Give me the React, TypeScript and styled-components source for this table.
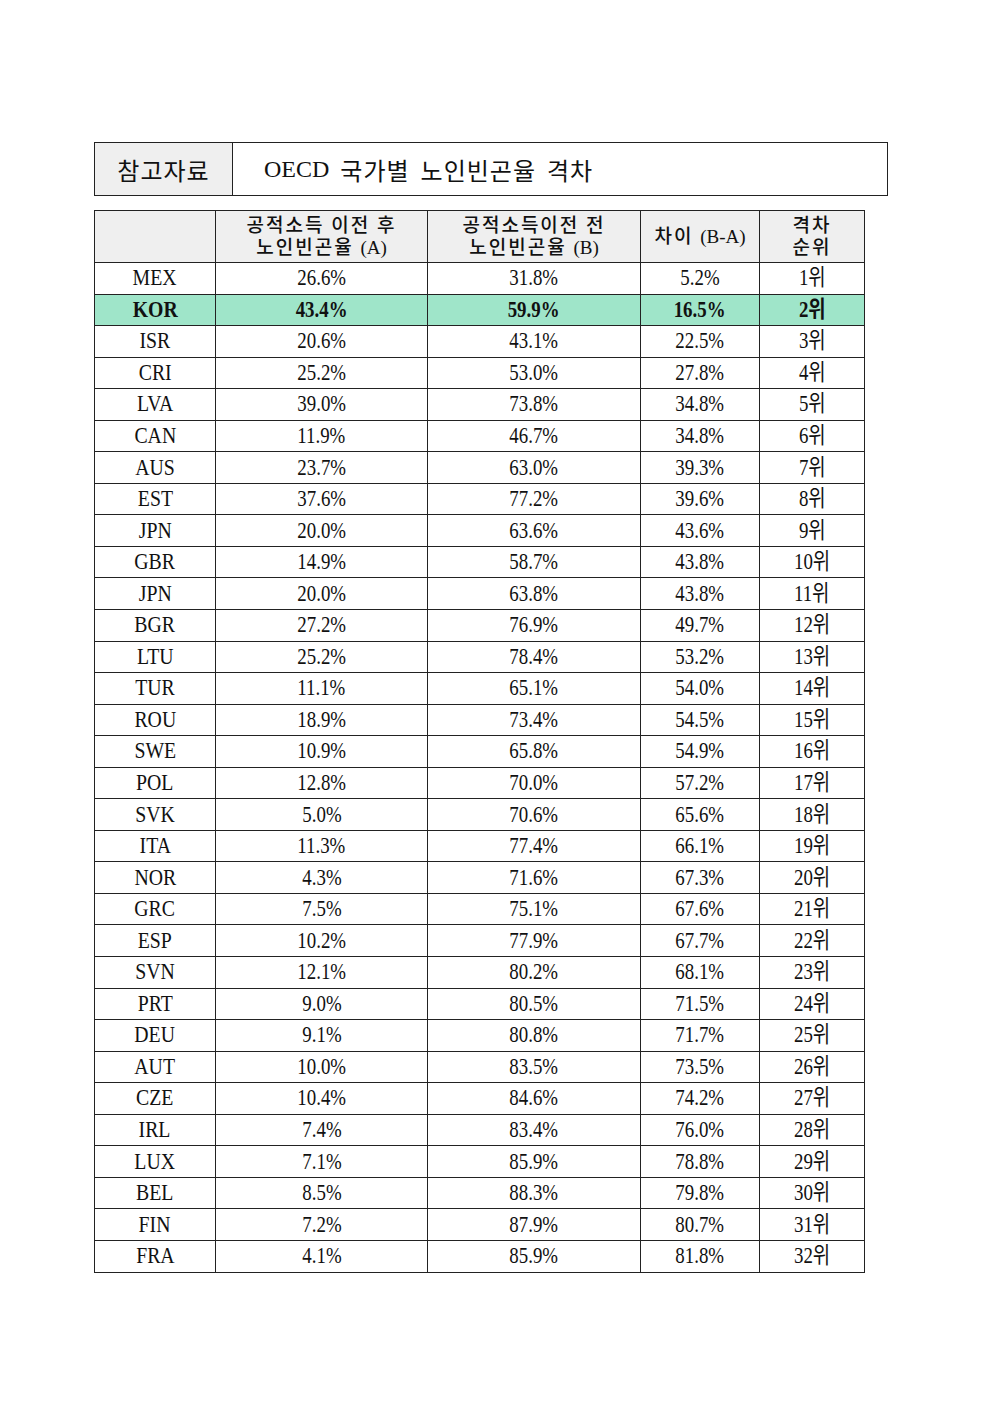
import React from "react";
import styled, { createGlobalStyle } from "styled-components";

const GlobalStyle = createGlobalStyle`
  body {
    margin: 0;
    background: #ffffff;
    font-family: "Liberation Serif", "Noto Sans CJK KR", serif;
    color: #111;
  }
`;

const Page = styled.div`
  width: 992px;
  min-height: 1403px;
  padding: 142px 0 0 94px;
  box-sizing: border-box;
`;

const TitleBox = styled.div`
  display: flex;
  width: 794px;
  height: 54px;
  border: 1px solid #222;
  box-sizing: border-box;
  margin-bottom: 14px;
`;

const TitleLabel = styled.div`
  width: 137px;
  background: #efefef;
  border-right: 1px solid #222;
  display: flex;
  align-items: center;
  justify-content: center;
  font-size: 24px;
  letter-spacing: 1px;
  font-family: "Noto Sans CJK KR", sans-serif;
`;

const TitleText = styled.div`
  display: flex;
  align-items: center;
  padding-left: 31px;
  font-size: 24px;
  letter-spacing: 1px;
  font-family: "Liberation Serif", "Noto Sans CJK KR", serif;
  word-spacing: 4px;
`;

const Latin = styled.span`
  letter-spacing: 0;
`;

const Table = styled.table`
  border-collapse: collapse;
  width: 770px;
  table-layout: fixed;
`;

const HeadCell = styled.th`
  height: 51px;
  padding: 0;
  background: #efefef;
  border: 1px solid #222;
  font-weight: 500;
  font-size: 19px;
  line-height: 22px;
  letter-spacing: 2px;
  font-family: "Liberation Serif", "Noto Sans CJK KR", serif;
`;

const Row = styled.tr<{ $highlight?: boolean }>`
  background: ${(p) => (p.$highlight ? "#9fe5c9" : "#ffffff")};
  font-weight: ${(p) => (p.$highlight ? "bold" : "normal")};
`;

const Cell = styled.td`
  height: 30.56px;
  padding: 0;
  border: 1px solid #222;
  text-align: center;
  font-size: 23px;
  line-height: 26px;
`;

const Narrow = styled.span<{ $scale?: number }>`
  display: inline-block;
  transform: scaleX(${(p) => p.$scale ?? 0.82});
  white-space: nowrap;
`;

const rows: [string, string, string, string, number][] = [
  ["MEX", "26.6%", "31.8%", "5.2%", 1],
  ["KOR", "43.4%", "59.9%", "16.5%", 2],
  ["ISR", "20.6%", "43.1%", "22.5%", 3],
  ["CRI", "25.2%", "53.0%", "27.8%", 4],
  ["LVA", "39.0%", "73.8%", "34.8%", 5],
  ["CAN", "11.9%", "46.7%", "34.8%", 6],
  ["AUS", "23.7%", "63.0%", "39.3%", 7],
  ["EST", "37.6%", "77.2%", "39.6%", 8],
  ["JPN", "20.0%", "63.6%", "43.6%", 9],
  ["GBR", "14.9%", "58.7%", "43.8%", 10],
  ["JPN", "20.0%", "63.8%", "43.8%", 11],
  ["BGR", "27.2%", "76.9%", "49.7%", 12],
  ["LTU", "25.2%", "78.4%", "53.2%", 13],
  ["TUR", "11.1%", "65.1%", "54.0%", 14],
  ["ROU", "18.9%", "73.4%", "54.5%", 15],
  ["SWE", "10.9%", "65.8%", "54.9%", 16],
  ["POL", "12.8%", "70.0%", "57.2%", 17],
  ["SVK", "5.0%", "70.6%", "65.6%", 18],
  ["ITA", "11.3%", "77.4%", "66.1%", 19],
  ["NOR", "4.3%", "71.6%", "67.3%", 20],
  ["GRC", "7.5%", "75.1%", "67.6%", 21],
  ["ESP", "10.2%", "77.9%", "67.7%", 22],
  ["SVN", "12.1%", "80.2%", "68.1%", 23],
  ["PRT", "9.0%", "80.5%", "71.5%", 24],
  ["DEU", "9.1%", "80.8%", "71.7%", 25],
  ["AUT", "10.0%", "83.5%", "73.5%", 26],
  ["CZE", "10.4%", "84.6%", "74.2%", 27],
  ["IRL", "7.4%", "83.4%", "76.0%", 28],
  ["LUX", "7.1%", "85.9%", "78.8%", 29],
  ["BEL", "8.5%", "88.3%", "79.8%", 30],
  ["FIN", "7.2%", "87.9%", "80.7%", 31],
  ["FRA", "4.1%", "85.9%", "81.8%", 32],
];

const App: React.FC = () => {
  return (
    <>
      <GlobalStyle />
      <Page>
        <TitleBox>
          <TitleLabel>참고자료</TitleLabel>
          <TitleText>
            <Latin>OECD</Latin>&nbsp;국가별 노인빈곤율 격차
          </TitleText>
        </TitleBox>
        <Table>
          <colgroup>
            <col style={{ width: 121 }} />
            <col style={{ width: 212 }} />
            <col style={{ width: 213 }} />
            <col style={{ width: 119 }} />
            <col style={{ width: 105 }} />
          </colgroup>
          <thead>
            <tr>
              <HeadCell />
              <HeadCell>
                공적소득 이전 후
                <br />
                노인빈곤율 <Latin>(A)</Latin>
              </HeadCell>
              <HeadCell>
                공적소득이전 전
                <br />
                노인빈곤율 <Latin>(B)</Latin>
              </HeadCell>
              <HeadCell>
                차이 <Latin>(B-A)</Latin>
              </HeadCell>
              <HeadCell>
                격차
                <br />
                순위
              </HeadCell>
            </tr>
          </thead>
          <tbody>
            {rows.map(([country, a, b, diff, rank], i) => (
              <Row key={`${country}-${i}`} $highlight={country === "KOR"}>
                <Cell>
                  <Narrow $scale={0.86}>{country}</Narrow>
                </Cell>
                <Cell>
                  <Narrow>{a}</Narrow>
                </Cell>
                <Cell>
                  <Narrow>{b}</Narrow>
                </Cell>
                <Cell>
                  <Narrow>{diff}</Narrow>
                </Cell>
                <Cell>
                  <Narrow>{rank}위</Narrow>
                </Cell>
              </Row>
            ))}
          </tbody>
        </Table>
      </Page>
    </>
  );
};

export default App;
